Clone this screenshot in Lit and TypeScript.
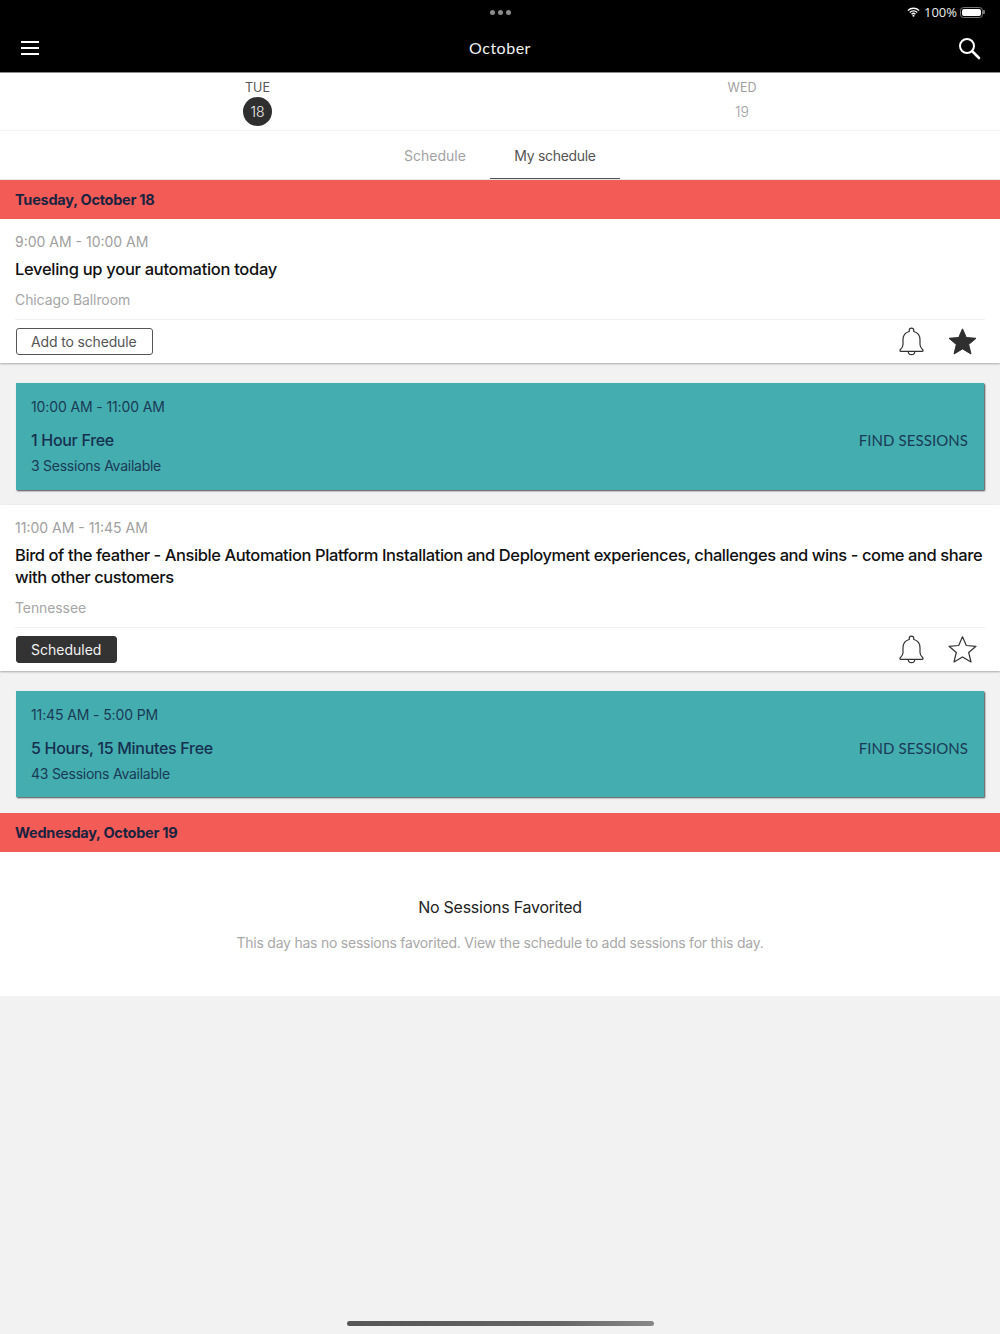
import { LitElement, html, css, svg } from "lit";
import { customElement } from "lit/decorators.js";

const bell = svg`<path d="M12.500 1.200a2.300 2.300 0 0 1 2.300 2.300v1c4 1 6.200 4.200 6.200 8.400v4.600c0 2.600 1.200 3.900 2.700 5.200.7.6.4 1.600-.5 1.600H1.800c-.9 0-1.200-1-.5-1.600 1.500-1.300 2.700-2.600 2.700-5.200v-4.600c0-4.200 2.200-7.400 6.200-8.400v-1a2.300 2.300 0 0 1 2.300-2.300Z" fill="none" stroke="#333" stroke-width="1.200" stroke-linejoin="round"/><path d="M9.300 24.500a3.200 3.200 0 0 0 6.400 0" fill="none" stroke="#333" stroke-width="1.200"/>`;
const starPath = "M14.500 1.800 18.300 10.500 28 11.300 20.700 17.500 23 27 14.500 21.900 6 27 8.300 17.500 1 11.300 10.700 10.500Z";

@customElement("app-root")
export class AppRoot extends LitElement {
  static styles = css`
    :host { display: flex; flex-direction: column; position: relative; width: 1000px; height: 1334px; background: #f2f2f2; font-family: "Inter", "Liberation Sans", sans-serif; overflow: hidden; color: #151515; }
    .top { background: #000; color: #fff; height: 72px; border-bottom: 1px solid #8a8a8a; flex: none; display: flex; flex-direction: column; }
    .status { height: 24px; display: flex; align-items: center; position: relative; padding-right: 17.500px; justify-content: flex-end; gap: 4px; font-size: 13px; font-family: "Open Sans", sans-serif; color: #eee; }
    .dots { position: absolute; left: 489.500px; top: 10px; display: flex; gap: 3px; }
    .dots i { width: 5px; height: 5px; border-radius: 50%; background: #8c8c8c; display: block; }
    .batt { width: 22.500px; height: 11px; border: 1px solid #777; border-radius: 3.500px; padding: 1px; box-sizing: border-box; display: flex; position: relative; margin-left: -1px; }
    .batt b { flex: 1; background: #fff; border-radius: 2px; }
    .batt::after { content: ""; position: absolute; right: -3px; top: 2.500px; width: 1.500px; height: 4px; background: #777; border-radius: 0 1px 1px 0; }
    .nav { flex: 1; display: grid; grid-template-columns: 1fr auto 1fr; align-items: center; padding: 0 18px 0 20px; }
    .nav svg:last-child { justify-self: end; }
    .nav h1 { margin: 0 2px 2px 0; font: 400 16px "Lato", sans-serif; letter-spacing: .5px; color: #f2f2f2; }
    .days { background: #fff; height: 57px; display: grid; grid-template-columns: 515px 1fr; border-bottom: 1px solid #f0f0f0; flex: none; }
    .day { display: flex; flex-direction: column; align-items: center; padding-top: 7px; font-size: 12.500px; color: #555; }
    .day:last-child { padding-right: 31px; color: #a0a0a0; }
    .day .n { width: 29px; height: 29px; margin-top: 2px; border-radius: 50%; display: flex; align-items: center; justify-content: center; font-size: 14px; font-weight: 300; }
    .day.on .n { background: #2f2f2f; color: #f2f2f2; }
    .tabs { background: #fff; height: 48px; display: flex; justify-content: center; flex: none; border-bottom: 1px solid #e6e6e6; }
    .tab { display: flex; align-items: center; justify-content: center; font-size: 14px; color: #a2a2a2; width: 110px; padding-top: 2px; box-sizing: border-box; border-bottom: 1.500px solid transparent; }
    .tab.on { color: #555; width: 130px; border-bottom-color: #555; letter-spacing: -.3px; }
    .date { background: #f25b56; height: 39px; display: flex; align-items: center; padding-left: 15px; font-size: 14.500px; font-weight: 700; color: #1a2340; flex: none; letter-spacing: -.25px; }
    .session { background: #fff; flex: none; padding: 0 15px; box-shadow: 0 1px 2px rgba(0,0,0,.3); position: relative; }
    .time { padding-top: 14px; line-height: 18px; font-size: 14px; color: #a0a0a0; }
    .title { margin-top: 8px; font-size: 16.500px; font-weight: 500; line-height: 21.500px; color: #111; letter-spacing: -.3px; }
    .title.long { letter-spacing: -.42px; }
    .room { margin-top: 10.500px; line-height: 18px; font-size: 14px; letter-spacing: -.1px; color: #a6a6a6; padding-bottom: 10px; border-bottom: 1px solid #f0f0f0; }
    .actions { height: 43px; display: flex; align-items: center; justify-content: space-between; }
    .btn { height: 27px; box-sizing: border-box; display: flex; align-items: center; padding: 0 15px 0 14px; border-radius: 3px; border: 1px solid #555; font-size: 14px; letter-spacing: -.15px; color: #555; margin-left: 1px; }
    .btn.dark { background: #333; border-color: #333; color: #f2f2f2; letter-spacing: 0; }
    .icons { display: flex; gap: 24px; align-items: center; margin-right: 8px; }
    .free-wrap { padding: 20px 16px 15.500px 16px; flex: none; }
    .free { background: #44adb0; height: 106.500px; box-sizing: border-box; padding: 15px 16px 0 15px; box-shadow: 1px 1px 1.500px rgba(0,0,0,.7); color: #1a3a55; display: flex; justify-content: space-between; align-items: flex-start; }
    .free .t { font-size: 14px; line-height: 18px; letter-spacing: -.12px; }
    .free .h { font-size: 16px; font-weight: 500; line-height: 22px; margin-top: 13px; letter-spacing: -.3px; color: #16304f; }
    .free .a { font-size: 14px; line-height: 18px; margin-top: 6px; letter-spacing: -.25px; }
    .find { font: 400 15px/18px "Lato", sans-serif; margin-top: 33px; letter-spacing: .08px; }
    .empty { background: #fff; height: 144px; flex: none; display: flex; flex-direction: column; align-items: center; }
    .empty h2 { margin: 45px 0 0; font-size: 16px; font-weight: 400; line-height: 20px; letter-spacing: -.25px; color: #222; }
    .empty p { margin: 17px 0 0; font-size: 14px; line-height: 18px; letter-spacing: -.24px; color: #a8a8a8; }
    .home { position: absolute; left: 346.500px; bottom: 8px; width: 307px; height: 5px; border-radius: 3px; background: linear-gradient(90deg,#555,#666 70%,#888); }
  `;

  session(time: string, title: string, room: string, scheduled: boolean, fav: boolean, long = false) {
    return html`<div class="session">
      <div class="time">${time}</div>
      <div class="title ${long ? "long" : ""}">${title}</div>
      <div class="room">${room}</div>
      <div class="actions">
        <div class="btn ${scheduled ? "dark" : ""}">${scheduled ? "Scheduled" : "Add to schedule"}</div>
        <div class="icons">
          <svg width="25" height="29" viewBox="0 0 25 29">${bell}</svg>
          <svg width="29" height="29" viewBox="0 0 29 29"><path d=${starPath} fill=${fav ? "#2f2f2f" : "none"} stroke=${fav ? "#2f2f2f" : "#333"} stroke-width=${fav ? "1" : "1.200"} stroke-linejoin="round"/></svg>
        </div>
      </div>
    </div>`;
  }

  free(t: string, h: string, a: string) {
    return html`<div class="free-wrap"><div class="free">
      <div><div class="t">${t}</div><div class="h">${h}</div><div class="a">${a}</div></div>
      <div class="find">FIND SESSIONS</div>
    </div></div>`;
  }

  render() {
    return html`
      <div class="top">
        <div class="status">
          <div class="dots"><i></i><i></i><i></i></div>
          <svg width="13" height="10" viewBox="0 0 15 11"><path d="M1 3.800a9.300 9.300 0 0 1 13 0M3.200 6a6.200 6.200 0 0 1 8.600 0M5.300 8.100a3.200 3.200 0 0 1 4.400 0" fill="none" stroke="#fff" stroke-width="1.600"/><circle cx="7.500" cy="9.800" r="1.200" fill="#fff"/></svg>
          <span>100%</span>
          <div class="batt"><b></b></div>
        </div>
        <div class="nav">
          <svg width="20" height="16" viewBox="0 0 20 16"><path d="M1 2h18M1 8h18M1 14h18" stroke="#fff" stroke-width="1.800" fill="none"/></svg>
          <h1>October</h1>
          <svg width="26" height="26" viewBox="0 0 26 26"><circle cx="11" cy="11" r="7" fill="none" stroke="#fff" stroke-width="2"/><path d="M16.500 16.500 23 23" stroke="#fff" stroke-width="2.600" stroke-linecap="round"/></svg>
        </div>
      </div>
      <div class="days">
        <div class="day on"><span>TUE</span><div class="n">18</div></div>
        <div class="day"><span>WED</span><div class="n">19</div></div>
      </div>
      <div class="tabs"><div class="tab">Schedule</div><div class="tab on">My schedule</div></div>
      <div class="date">Tuesday, October 18</div>
      ${this.session("9:00 AM - 10:00 AM", "Leveling up your automation today", "Chicago Ballroom", false, true)}
      ${this.free("10:00 AM - 11:00 AM", "1 Hour Free", "3 Sessions Available")}
      ${this.session("11:00 AM - 11:45 AM", "Bird of the feather - Ansible Automation Platform Installation and Deployment experiences, challenges and wins - come and share with other customers", "Tennessee", true, false, true)}
      ${this.free("11:45 AM - 5:00 PM", "5 Hours, 15 Minutes Free", "43 Sessions Available")}
      <div class="date">Wednesday, October 19</div>
      <div class="empty">
        <h2>No Sessions Favorited</h2>
        <p>This day has no sessions favorited. View the schedule to add sessions for this day.</p>
      </div>
      <div class="home"></div>
    `;
  }
}
